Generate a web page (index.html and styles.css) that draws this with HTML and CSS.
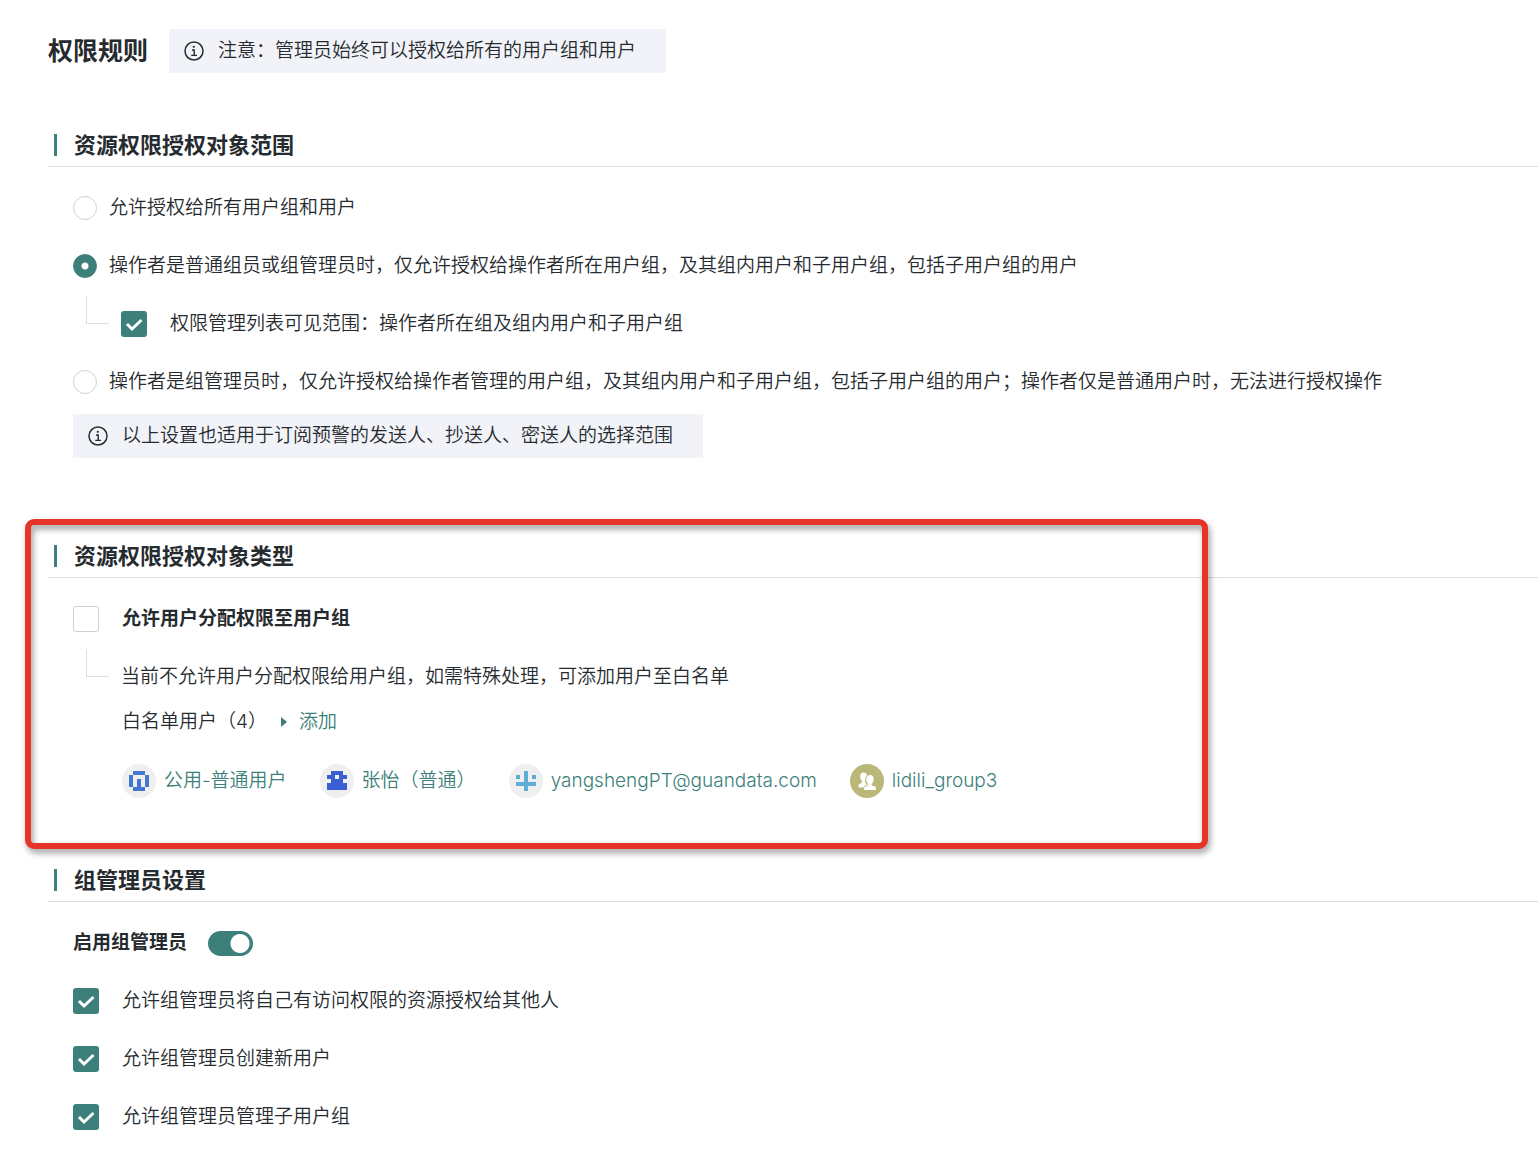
FILE: index.html
```html
<!DOCTYPE html>
<html lang="zh-CN">
<head>
<meta charset="utf-8">
<meta name="viewport" content="width=device-width, initial-scale=1">
<title>权限规则</title>
<link rel="stylesheet" href="styles.css">
</head>
<body>
<svg class="sprite" aria-hidden="true">
  <symbol id="icon-info" viewBox="0 0 20 20">
    <circle cx="10" cy="10" r="9" fill="none" stroke="currentColor" stroke-width="1.5"/>
    <circle cx="9.8" cy="5.8" r="1.1" fill="currentColor"/>
    <path d="M8 9h2.2v5.2M7.2 14.4h5.8" fill="none" stroke="currentColor" stroke-width="1.4"/>
  </symbol>
</svg>
<main class="page">
  <header class="page-head">
    <h1 class="page-title">权限规则</h1>
    <p class="notice"><svg class="notice-icon" aria-hidden="true"><use href="#icon-info"/></svg>注意：管理员始终可以授权给所有的用户组和用户</p>
  </header>

  <section class="section">
    <h2 class="section-title">资源权限授权对象范围</h2>
    <div class="section-body">
      <label class="row"><input class="radio" type="radio" name="scope">允许授权给所有用户组和用户</label>
      <label class="row"><input class="radio" type="radio" name="scope" checked>操作者是普通组员或组管理员时，仅允许授权给操作者所在用户组，及其组内用户和子用户组，包括子用户组的用户</label>
      <div class="row nested">
        <span class="elbow"></span>
        <label class="row check-row"><input class="check" type="checkbox" checked>权限管理列表可见范围：操作者所在组及组内用户和子用户组</label>
      </div>
      <label class="row"><input class="radio" type="radio" name="scope">操作者是组管理员时，仅允许授权给操作者管理的用户组，及其组内用户和子用户组，包括子用户组的用户；操作者仅是普通用户时，无法进行授权操作</label>
    </div>
    <p class="notice notice-inset"><svg class="notice-icon" aria-hidden="true"><use href="#icon-info"/></svg>以上设置也适用于订阅预警的发送人、抄送人、密送人的选择范围</p>
  </section>

  <section class="section section-marked">
    <h2 class="section-title">资源权限授权对象类型</h2>
    <div class="section-body">
      <label class="row check-row strong"><input class="check" type="checkbox">允许用户分配权限至用户组</label>
      <div class="row nested">
        <span class="elbow"></span>
        <p class="text">当前不允许用户分配权限给用户组，如需特殊处理，可添加用户至白名单</p>
      </div>
    </div>
    <div class="whitelist">
      <div class="row whitelist-head">
        <span>白名单用户（4）</span>
        <button class="add" type="button"><svg class="add-arrow" viewBox="0 0 6 10" aria-hidden="true"><path d="M0 0l6 5-6 5z" fill="currentColor"/></svg>添加</button>
      </div>
      <ul class="users">
        <li><a class="user" href="#"><svg class="avatar" viewBox="0 0 34 34" aria-hidden="true"><circle cx="17" cy="17" r="17" fill="#efeff0"/><path fill="#4279cf" d="M11 7h12v4H11zM7 11h4v12H7zM23 11h4v12h-4zM15 15h4v8h4v4H11v-4h4z"/></svg>公用-普通用户</a></li>
        <li><a class="user" href="#"><svg class="avatar" viewBox="0 0 34 34" aria-hidden="true"><circle cx="17" cy="17" r="17" fill="#efeff0"/><path fill="#3a5fd3" d="M11 7h12v4h4v4h-4v4h4v7H7v-7h4v-4H7v-4h4z"/><path fill="#efeff0" d="M15 11h4v4h-4z"/></svg>张怡（普通）</a></li>
        <li><a class="user" href="#"><svg class="avatar" viewBox="0 0 34 34" aria-hidden="true"><circle cx="17" cy="17" r="17" fill="#efeff0"/><path fill="#5fadd6" d="M15 7h4v11h8v4h-8v5h-4v-5H7v-4h8zM7 11h4v4H7zM23 11h4v4h-4z"/></svg>yangshengPT@guandata.com</a></li>
        <li><a class="user" href="#"><svg class="avatar" viewBox="0 0 34 34" aria-hidden="true"><circle cx="17" cy="17" r="17" fill="#b9b878"/><g fill="#fff" stroke="#b9b878" stroke-width="1"><path d="M13.500 8c2.500 0 4 2 4 4.500 0 2-.8 3.500-1.800 4.500v1.500l3 3V24H8v-2c0-2 1-2.500 3.500-3.500V17c-1-1-1.800-2.500-1.800-4.500C9.700 10 11 8 13.500 8z"/><path d="M20 10.500c2.600 0 4.200 2 4.200 4.700 0 2-.8 3.500-2 4.600V21c3 1 4.300 1.500 4.300 4v1.500h-13V25c0-2.500 1.300-3 4.300-4v-1.200c-1.200-1.100-2-2.600-2-4.600 0-2.700 1.600-4.700 4.200-4.700z"/></g></svg>lidili_group3</a></li>
      </ul>
    </div>
  </section>

  <section class="section">
    <h2 class="section-title">组管理员设置</h2>
    <div class="section-body">
      <label class="row switch-row strong">启用组管理员<input class="switch" type="checkbox" role="switch" checked></label>
      <label class="row check-row"><input class="check" type="checkbox" checked>允许组管理员将自己有访问权限的资源授权给其他人</label>
      <label class="row check-row"><input class="check" type="checkbox" checked>允许组管理员创建新用户</label>
      <label class="row check-row"><input class="check" type="checkbox" checked>允许组管理员管理子用户组</label>
    </div>
  </section>
</main>
</body>
</html>
```

FILE: styles.css
```css
:root {
  --accent: #3d7f7a;
  --ink: #262b2f;
  --line: #dcdfe1;
  --panel: #f2f3f8;
}

* { box-sizing: border-box; }

body {
  margin: 0;
  background: #fff;
  color: var(--ink);
  font: 350 19px/32px Inter, "Noto Sans CJK SC", sans-serif;
}

h1, h2, p, ul { margin: 0; padding: 0; }

.sprite { display: none; }

.page { padding: 29px 0 24px 48px; }

.page-head {
  display: flex;
  align-items: center;
  gap: 21px;
  margin-bottom: 51px;
}

.page-title { font-size: 25px; font-weight: 700; }

.notice {
  display: flex;
  align-items: center;
  gap: 14px;
  width: fit-content;
  padding: 6px 30px 6px 15px;
  background: var(--panel);
}

.notice-icon { flex: none; width: 20px; height: 20px; }

.notice-inset { margin: 16px 0 0 25px; }

.section { margin-bottom: 77px; }

.section:last-child { margin-bottom: 0; }

.section-title {
  display: flex;
  align-items: center;
  gap: 17px;
  padding: 5px 0 5px 6px;
  border-bottom: 1px solid var(--line);
  font-size: 22px;
  font-weight: 700;
}

.section-title::before {
  content: "";
  width: 3px;
  height: 22px;
  background: var(--accent);
}

.section-body {
  display: flex;
  flex-direction: column;
  align-items: flex-start;
  gap: 26px;
  padding: 25px 0 0 25px;
}

.row { display: flex; align-items: center; gap: 12px; }

.check-row { gap: 23px; }

.switch-row { gap: 21px; }

.strong { font-weight: 700; }

.nested { padding-left: 13px; }

.elbow {
  flex: none;
  align-self: flex-start;
  width: 23px;
  height: 28px;
  margin-top: -12px;
  border: solid var(--line);
  border-width: 0 0 1px 1px;
}

.radio, .check, .switch {
  appearance: none;
  flex: none;
  margin: 0;
  background: #fff center / contain no-repeat;
}

.radio {
  width: 24px;
  height: 24px;
  border: 1px solid #cfd2d4;
  border-radius: 50%;
}

.radio:checked {
  border-color: var(--accent);
  background: radial-gradient(circle, #fff 3px, var(--accent) 4px);
}

.check {
  width: 26px;
  height: 26px;
  border: 1px solid #cfd2d4;
  border-radius: 3px;
}

.check:checked {
  border: 0;
  background-color: var(--accent);
  background-image: url("data:image/svg+xml,%3Csvg xmlns='http://www.w3.org/2000/svg' viewBox='0 0 26 26'%3E%3Cpath d='M6 13l5 5L20.500 9' fill='none' stroke='%23fff' stroke-width='3'/%3E%3C/svg%3E");
}

.switch {
  width: 45px;
  height: 25px;
  border-radius: 13px;
  background: #c5c9cc;
}

.switch:checked {
  background: radial-gradient(circle at 32px 50%, #fff 9px, var(--accent) 10px);
}

.whitelist { padding: 13px 0 0 74px; }

.whitelist-head { gap: 14px; }

.add {
  display: flex;
  align-items: center;
  gap: 12px;
  padding: 0;
  border: 0;
  background: none;
  color: var(--accent);
  font: inherit;
}

.add-arrow { width: 6px; height: 10px; }

.users {
  display: flex;
  flex-wrap: wrap;
  gap: 12px 33px;
  padding-top: 26px;
  list-style: none;
}

.user {
  display: flex;
  align-items: center;
  gap: 8px;
  color: var(--accent);
  text-decoration: none;
}

.avatar { flex: none; width: 34px; height: 34px; }

.section-marked { position: relative; margin-bottom: 61px; }

/* highlight frame drawn over the section */
.section-marked::after {
  content: "";
  position: absolute;
  inset: -16px 330px -51px -23px;
  border: 6px solid #e63428;
  border-radius: 9px;
  filter: drop-shadow(2px 4px 3px rgba(0, 0, 0, .4));
  pointer-events: none;
}
```
